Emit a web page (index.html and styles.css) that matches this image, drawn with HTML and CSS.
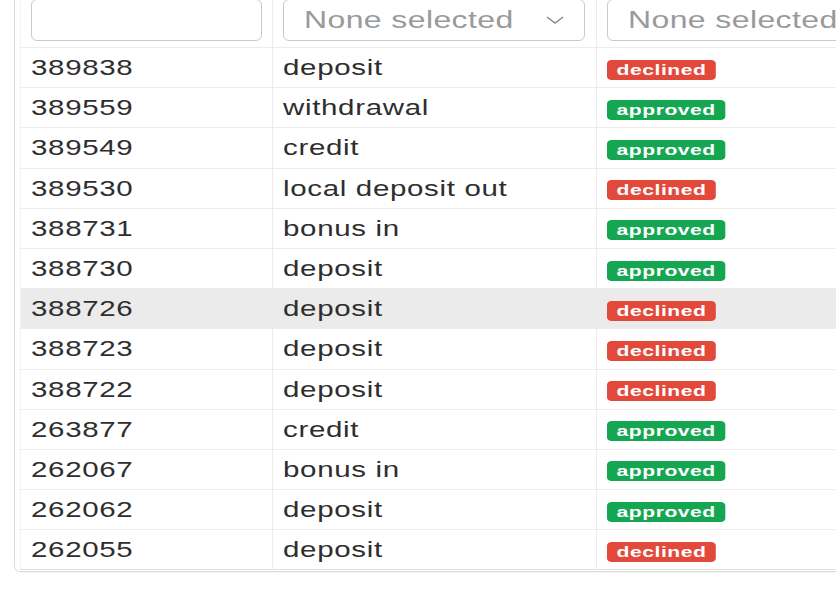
FILE: index.html
```html
<!DOCTYPE html>
<html>
<head>
<meta charset="utf-8">
<link rel="stylesheet" href="styles.css">
</head>
<body>
<div class="panel">
  <div class="table">
    <div class="row head">
      <div class="cell c1"><div class="input"></div></div>
      <div class="cell c2"><div class="input select"><span class="ph">None selected</span>
        <svg class="chev" width="20" height="10" viewBox="0 0 20 10"><polyline points="2,2 10,8 18,2" fill="none" stroke="#888" stroke-width="1.4"/></svg></div></div>
      <div class="cell c3"><div class="input select"><span class="ph">None selected</span></div></div>
    </div>
    <div class="row"><div class="cell c1"><span class="t">389838</span></div><div class="cell c2"><span class="t">deposit</span></div><div class="cell c3"><span class="badge red">declined</span></div></div>
    <div class="row"><div class="cell c1"><span class="t">389559</span></div><div class="cell c2"><span class="t">withdrawal</span></div><div class="cell c3"><span class="badge green">approved</span></div></div>
    <div class="row"><div class="cell c1"><span class="t">389549</span></div><div class="cell c2"><span class="t">credit</span></div><div class="cell c3"><span class="badge green">approved</span></div></div>
    <div class="row"><div class="cell c1"><span class="t">389530</span></div><div class="cell c2"><span class="t">local deposit out</span></div><div class="cell c3"><span class="badge red">declined</span></div></div>
    <div class="row"><div class="cell c1"><span class="t">388731</span></div><div class="cell c2"><span class="t">bonus in</span></div><div class="cell c3"><span class="badge green">approved</span></div></div>
    <div class="row"><div class="cell c1"><span class="t">388730</span></div><div class="cell c2"><span class="t">deposit</span></div><div class="cell c3"><span class="badge green">approved</span></div></div>
    <div class="row hover"><div class="cell c1"><span class="t">388726</span></div><div class="cell c2"><span class="t">deposit</span></div><div class="cell c3"><span class="badge red">declined</span></div></div>
    <div class="row"><div class="cell c1"><span class="t">388723</span></div><div class="cell c2"><span class="t">deposit</span></div><div class="cell c3"><span class="badge red">declined</span></div></div>
    <div class="row"><div class="cell c1"><span class="t">388722</span></div><div class="cell c2"><span class="t">deposit</span></div><div class="cell c3"><span class="badge red">declined</span></div></div>
    <div class="row"><div class="cell c1"><span class="t">263877</span></div><div class="cell c2"><span class="t">credit</span></div><div class="cell c3"><span class="badge green">approved</span></div></div>
    <div class="row"><div class="cell c1"><span class="t">262067</span></div><div class="cell c2"><span class="t">bonus in</span></div><div class="cell c3"><span class="badge green">approved</span></div></div>
    <div class="row"><div class="cell c1"><span class="t">262062</span></div><div class="cell c2"><span class="t">deposit</span></div><div class="cell c3"><span class="badge green">approved</span></div></div>
    <div class="row last"><div class="cell c1"><span class="t">262055</span></div><div class="cell c2"><span class="t">deposit</span></div><div class="cell c3"><span class="badge red">declined</span></div></div>
  </div>
</div>
</body>
</html>
```
FILE: styles.css
```css
html, body {
  margin: 0;
  padding: 0;
  overflow: hidden;
  background: #fff;
  width: 836px;
  height: 600px;
}
body {
  font-family: "Liberation Sans", Arial, sans-serif;
  color: #2e2e2e;
}
.panel {
  margin-top: -10px;
  margin-left: 14px;
  width: 1100px;
  border: 1px solid #dcdcdc;
  border-radius: 6px;
  padding: 0 5px 1px 5px;
  box-shadow: 0 1px 1px rgba(0,0,0,0.04);
}
.table {
  display: flex;
  flex-direction: column;
}
.row {
  display: grid;
  grid-template-columns: 252px 324px 1fr;
  height: 40.2px;
  box-sizing: border-box;
  border-bottom: 1px solid #ececec;
  border-left: 1px solid #f2f2f2;
}
.row.last { border-bottom: 1px solid #e2e2e2; }
.row.head {
  height: 57px;
  align-items: start;
}
.row.hover { background: #ebebeb; }
.cell {
  display: flex;
  align-items: center;
  padding-left: 10px;
  border-right: 1px solid #ececec;
  font-size: 22px;
  height: 100%;
  box-sizing: border-box;
}
.t {
  display: inline-block;
  transform: scaleX(1.34);
  transform-origin: left center;
  white-space: nowrap;
  letter-spacing: 0.5px;
  margin-top: 1px;
}
.head .cell {
  padding-top: 8px;
  align-items: flex-start;
}
.input {
  box-sizing: border-box;
  height: 42px;
  width: 231px;
  border: 1px solid #c9c9c9;
  border-radius: 6px;
  background: #fff;
}
.c2 .input { width: 302px; }
.c3 .input { width: 400px; }
.select {
  display: flex;
  align-items: center;
  padding-left: 20px;
  position: relative;
}
.ph {
  display: inline-block;
  color: #9a9a9a;
  font-size: 23.5px;
  letter-spacing: 0.3px;
  white-space: nowrap;
  transform: scaleX(1.36);
  transform-origin: left center;
}
.chev {
  position: absolute;
  right: 19px;
  top: 15px;
}
.badge {
  display: inline-block;
  color: #fff;
  font-weight: bold;
  font-size: 15.5px;
  letter-spacing: 0.4px;
  line-height: 20px;
  height: 20px;
  padding: 0 7px 0 7px;
  border-radius: 3.5px;
  margin-top: 4px;
  transform: scaleX(1.36);
  transform-origin: left center;
  white-space: nowrap;
}
.red { background: #e2493a; }
.green { background: #14a651; }
```
